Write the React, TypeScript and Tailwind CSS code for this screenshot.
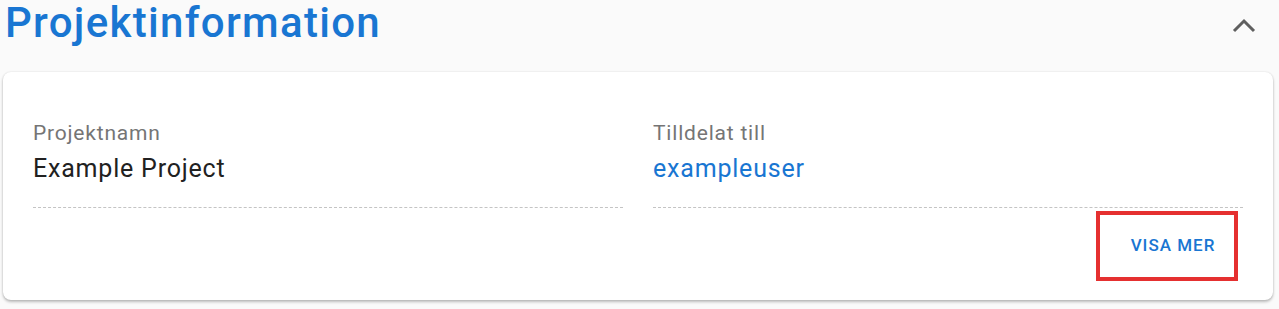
import React from 'react';

const fields = [
  { label: 'Projektnamn', value: 'Example Project', link: false },
  { label: 'Tilldelat till', value: 'exampleuser', link: true },
];

export default function App() {
  return (
    <div
      className="min-h-[309px] w-full bg-[#fafafa] px-[3px]"
      style={{ fontFamily: 'Roboto, "Liberation Sans", sans-serif' }}
    >
      <div className="flex h-[72px] items-start justify-between">
        <h1 className="-mt-[2px] pl-[2px] text-[42px] font-medium leading-[50px] tracking-[1.3px] text-[#1976d2]">
          Projektinformation
        </h1>
        <button className="mr-[18px] mt-[14px] flex h-[24px] w-[28px] items-center justify-center">
          <svg width="24" height="16" viewBox="0 0 24 16" fill="none">
            <path d="M2 13 L12 3 L22 13" stroke="#5f5f5f" strokeWidth="3" />
          </svg>
        </button>
      </div>

      <div className="mr-[3px] rounded-[8px] bg-white px-[30px] pb-[19px] pt-[49px] shadow-[0_2px_3px_rgba(0,0,0,0.25),0_0_2px_rgba(0,0,0,0.12)]">
        <div className="grid grid-cols-2 gap-[30px]">
          {fields.map((f) => (
            <div key={f.label} className="border-b border-dashed border-[#c4c4c4] pb-[23px]">
              <div className="text-[21px] leading-[25px] tracking-[0.8px] text-[#757575]">{f.label}</div>
              <div
                className={
                  'mt-[8px] text-[25px] leading-[30px] tracking-[0.8px] ' +
                  (f.link ? 'text-[#1976d2]' : 'text-[#212121]')
                }
              >
                {f.value}
              </div>
            </div>
          ))}
        </div>
        <div className="mt-[3px] flex justify-end pr-[5px]">
          <button className="flex h-[70px] w-[142px] items-center justify-center border-4 border-[#e53030] pl-[12px] text-[17px] font-medium uppercase tracking-[1px] text-[#1976d2]">
            Visa mer
          </button>
        </div>
      </div>
    </div>
  );
}
